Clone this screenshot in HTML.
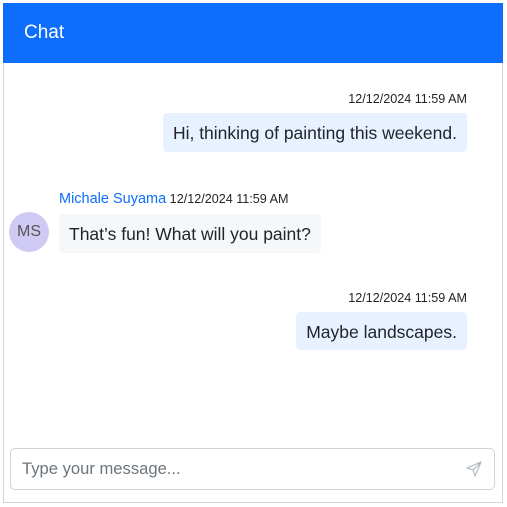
<!DOCTYPE html>
<html><head><style>
*{margin:0;padding:0;box-sizing:border-box}
body{width:507px;height:507px;background:#fff;font-family:"Liberation Sans",sans-serif;position:relative;overflow:hidden}
.box{position:absolute;left:3px;top:3px;width:500px;height:500px;border:1px solid #ced4da}
.hdr{position:absolute;left:3px;top:3px;width:500px;height:60px;background:#0d6efd;color:#fff;font-size:19px;padding:20px 0 0 21px;line-height:20px}
.ts{position:absolute;font-size:12.6px;color:#212529;line-height:14px;white-space:nowrap}
.b{position:absolute;border-radius:4px;font-size:17.5px;color:#212529;line-height:20px;padding:10px 10px;white-space:nowrap}
.me{background:#e7f1ff}
.ot{background:#f6f7f9}
.av{position:absolute;left:9px;top:212px;width:40px;height:40px;border-radius:50%;background:#cfcaf3;color:#555;font-size:16px;text-align:center;line-height:40px}
.inp{position:absolute;left:10px;top:448px;width:485px;height:42px;border:1px solid #ced4da;border-radius:5px;font-size:16.6px;color:#6c757d;padding:10px 0 0 11px;line-height:20px}
</style></head><body>
<div class="box"></div>
<div class="hdr">Chat</div>
<div class="ts" style="right:40px;top:92px">12/12/2024 11:59 AM</div>
<div class="b me" style="right:40px;top:113px;height:39px">Hi, thinking of painting this weekend.</div>
<div class="ts" style="left:59px;top:192px"><span style="color:#0d6efd;font-size:14.5px">Michale Suyama</span> 12/12/2024 11:59 AM</div>
<div class="av">MS</div>
<div class="b ot" style="left:59px;top:214px;height:39px">That’s fun! What will you paint?</div>
<div class="ts" style="right:40px;top:291px">12/12/2024 11:59 AM</div>
<div class="b me" style="right:40px;top:312px;height:38px">Maybe landscapes.</div>
<div class="inp">Type your message...
<svg style="position:absolute;right:12px;top:12px" width="16" height="16" viewBox="0 0 16 16" fill="none" stroke="#adb5bd" stroke-width="1.1" stroke-linejoin="round"><path d="M15 1L1 7l6 2 2 6z M15 1L7 9"/></svg>
</div>
</body></html>
